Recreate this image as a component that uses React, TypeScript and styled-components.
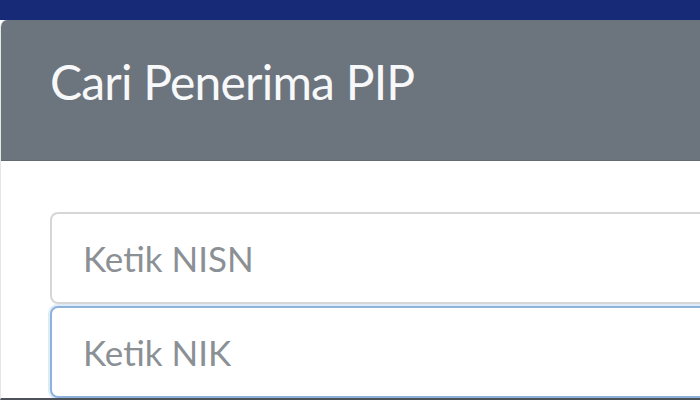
import React from "react";
import styled, { createGlobalStyle } from "styled-components";

const GlobalStyle = createGlobalStyle`
  html, body {
    margin: 0;
    padding: 0;
    background: #ffffff;
    overflow: hidden;
  }
  body {
    font-family: Lato, "Noto Sans", sans-serif;
  }
`;

const Page = styled.div`
  width: 700px;
  height: 400px;
  overflow: hidden;
  display: flex;
  flex-direction: column;
  background: #ffffff;
`;

const TopBar = styled.div`
  flex: 0 0 20px;
  background: #172a78;
`;

const Card = styled.section`
  flex: 1;
  width: 1000px;
  display: flex;
  flex-direction: column;
  border-left: 1px solid #e4e6e8;
  border-top-left-radius: 7px;
  overflow: hidden;
  background: #ffffff;
  border-bottom: 2px solid #4c5258;
`;

const CardHeader = styled.header`
  flex: 0 0 141px;
  display: flex;
  align-items: center;
  padding: 0 0 18px 49px;
  box-sizing: border-box;
  background: #6c747e;
  border-bottom: 1px solid #636a73;
`;

const Title = styled.h1`
  margin: 0;
  font-family: Lato, "Noto Sans", sans-serif;
  font-weight: 400;
  font-size: 48px;
  color: #f7f8f9;
  letter-spacing: -0.8px;
`;

const CardBody = styled.div`
  display: flex;
  flex-direction: column;
  gap: 2px;
  padding: 51px 0 0 49px;
`;

const Field = styled.input<{ $focused?: boolean }>`
  box-sizing: border-box;
  width: 900px;
  height: 92px;
  padding: 0 31px;
  border-radius: 8px;
  font-family: Lato, "Noto Sans", sans-serif;
  font-size: 35px;
  color: #495057;
  background: #ffffff;
  outline: none;
  border: 2px solid ${(p) => (p.$focused ? "#8db3dc" : "#d4d6d8")};
  box-shadow: ${(p) =>
    p.$focused ? "0 0 0 2px rgba(160, 196, 236, 0.35)" : "none"};
  &::placeholder {
    color: #8b9095;
  }
`;

export default function App() {
  return (
    <>
      <GlobalStyle />
      <Page>
        <TopBar />
        <Card>
          <CardHeader>
            <Title>Cari Penerima PIP</Title>
          </CardHeader>
          <CardBody>
            <Field placeholder="Ketik NISN" />
            <Field $focused placeholder="Ketik NIK" />
          </CardBody>
        </Card>
      </Page>
    </>
  );
}
